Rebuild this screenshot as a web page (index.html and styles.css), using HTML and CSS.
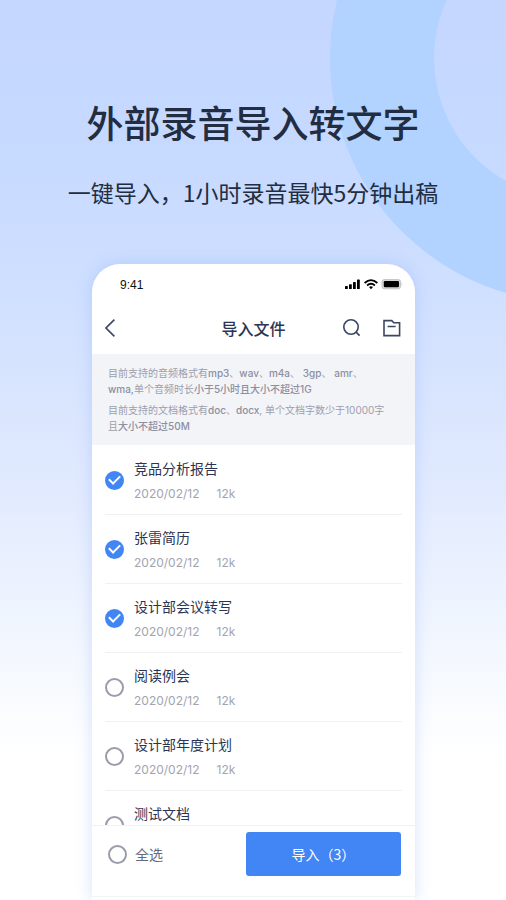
FILE: index.html
```html
<!DOCTYPE html>
<html lang="zh-CN">
  <head>
    <meta charset="utf-8">
    <meta name="viewport" content="width=device-width, initial-scale=1.0">
    <title>外部录音导入转文字</title>
    <link rel="stylesheet" href="styles.css">
  </head>
  <body>
    <div class="backdrop"><svg viewBox="0 0 176 294"><circle cx="245" cy="58" r="193"/></svg></div>

    <header class="intro">
      <h1>外部录音导入转文字</h1>
      <p>一键导入，1小时录音最快5分钟出稿</p>
    </header>

    <main class="phone">
      <!-- status bar -->
      <div class="status-bar">
        <span>9:41</span>
        <svg width="58" height="12" viewBox="0 0 58 12">
          <rect x="0" y="7" width="2.8" height="3" rx="0.6"/>
          <rect x="4" y="5.2" width="2.8" height="4.8" rx="0.6"/>
          <rect x="8" y="3" width="2.8" height="7" rx="0.6"/>
          <rect x="12" y="0.6" width="2.8" height="9.4" rx="0.6"/>
          <g fill="none" stroke="#000" stroke-width="1.8">
            <path d="M19.6 4 Q26 -1.8 32.4 4"/>
            <path d="M22.1 6.5 Q26 3 29.9 6.5"/>
          </g>
          <path d="M24 8.1 Q26 6.6 28 8.1 L26 10.3 Z"/>
          <rect x="37" y="0.6" width="18.6" height="9.2" rx="2.4" fill="#d8d8d8" stroke="#c4c4c4"/>
          <rect x="38.8" y="2.1" width="15.2" height="6.2" rx="1.2"/>
          <path d="M56.6 3.6 Q58 5.2 56.6 6.8 Z" fill="#b5b5b5"/>
        </svg>
      </div>

      <!-- nav bar -->
      <nav class="nav-bar">
        <button class="icon-btn" type="button" aria-label="返回">
          <svg width="20" height="20" viewBox="0 0 20 20"><path d="M9.4 1.6 L1 10 L9.4 18.4"/></svg>
        </button>
        <h2>导入文件</h2>
        <div class="nav-actions">
          <button class="icon-btn" type="button" aria-label="搜索">
            <svg width="20" height="20" viewBox="0 0 20 20"><circle cx="9" cy="9" r="7.2"/><path d="M14.1 14.1 L17.6 17.6"/></svg>
          </button>
          <button class="icon-btn" type="button" aria-label="文件夹">
            <svg width="20" height="20" viewBox="0 0 20 20"><path d="M2 2.6 H9.8 L11.8 4.8 H17.6 V17.6 H2 Z M5.6 8.5 H13.6"/></svg>
          </button>
        </div>
      </nav>

      <section class="notice">
        <p>目前支持的音频格式有<b>mp3</b>、<b>wav</b>、<b>m4a</b>、 <b>3gp</b>、 <b>amr</b>、<br><b>wma,</b>单个音频时长<b>小于5小时且大小不超过1G</b></p>
        <p>目前支持的文档格式有<b>doc</b>、<b>docx</b>, 单个文档字数少于10000字<br>且<b>大小不超过50M</b></p>
      </section>

      <!-- file list -->
      <ul class="file-list">
        <li>
          <label class="file">
            <input class="tick" type="checkbox" checked>
            <span class="file-text"><span class="name">竞品分析报告</span><span class="meta"><span>2020/02/12</span><span>12k</span></span></span>
          </label>
        </li>
        <li>
          <label class="file">
            <input class="tick" type="checkbox" checked>
            <span class="file-text"><span class="name">张雷简历</span><span class="meta"><span>2020/02/12</span><span>12k</span></span></span>
          </label>
        </li>
        <li>
          <label class="file">
            <input class="tick" type="checkbox" checked>
            <span class="file-text"><span class="name">设计部会议转写</span><span class="meta"><span>2020/02/12</span><span>12k</span></span></span>
          </label>
        </li>
        <li>
          <label class="file">
            <input class="tick" type="checkbox">
            <span class="file-text"><span class="name">阅读例会</span><span class="meta"><span>2020/02/12</span><span>12k</span></span></span>
          </label>
        </li>
        <li>
          <label class="file">
            <input class="tick" type="checkbox">
            <span class="file-text"><span class="name">设计部年度计划</span><span class="meta"><span>2020/02/12</span><span>12k</span></span></span>
          </label>
        </li>
        <li>
          <label class="file">
            <input class="tick" type="checkbox">
            <span class="file-text"><span class="name">测试文档</span></span>
          </label>
        </li>
      </ul>

      <footer class="action-bar">
        <label class="select-all"><input class="tick" type="checkbox">全选</label>
        <button class="import-btn" type="button">导入（3）</button>
      </footer>
      <div class="home-area"></div>
    </main>
  </body>
</html>
```

FILE: styles.css
```css
* {
  box-sizing: border-box;
}

body {
  margin: 0;
  height: 100vh;
  display: flex;
  flex-direction: column;
  position: relative;
  overflow: hidden;
  font-family: "Noto Sans CJK SC", sans-serif;
  color: #2b3553;
  background: linear-gradient(#c5d7ff 0%, #c6d9ff 16%, #d0e0ff 33%, #e1eafe 54%, #f1f6fe 70%, #ffffff 84%);
}

h1, h2, p, ul {
  margin: 0;
  padding: 0;
  font-weight: 400;
}

/* big ring behind the heading */
.backdrop {
  position: absolute;
  top: 0;
  right: 0;
  width: 176px;
}

.backdrop svg {
  display: block;
  width: 100%;
  fill: none;
  stroke: #b2d3ff;
  stroke-width: 104;
}

.intro {
  position: relative;
  padding-top: 95px;
  text-align: center;
  color: #222d42;
}

.intro h1 {
  font-size: 37px;
  line-height: 54px;
  font-weight: 500;
}

.intro p {
  margin-top: 26px;
  font-size: 23px;
  line-height: 34px;
}

/* phone */
.phone {
  position: relative;
  flex: 1;
  min-height: 0;
  margin: 55px 91px 0 92px;
  display: flex;
  flex-direction: column;
  background: #ffffff;
  border-radius: 28px 28px 0 0;
  box-shadow: 0 0 16px rgba(120, 155, 245, 0.3);
}

.status-bar {
  height: 42px;
  padding: 0 12px 0 28px;
  display: flex;
  align-items: center;
  justify-content: space-between;
  font-family: "Liberation Sans", Arial, sans-serif;
  font-size: 12px;
  color: #111111;
}

.nav-bar {
  height: 48px;
  padding: 0 13px 4px;
  display: grid;
  grid-template-columns: 1fr auto 1fr;
  align-items: center;
}

.nav-bar h2 {
  font-size: 16px;
  line-height: 24px;
  font-weight: 500;
}

.nav-actions {
  display: flex;
  justify-content: flex-end;
  gap: 20px;
}

.icon-btn {
  width: 20px;
  height: 20px;
  padding: 0;
  border: 0;
  background: none;
}

.icon-btn svg {
  display: block;
  fill: none;
  stroke: #3b4862;
  stroke-width: 1.6;
}

.notice {
  padding: 11px 16px;
  background: #f3f4f7;
  font-family: Inter, "Noto Sans CJK SC", sans-serif;
  font-size: 10px;
  line-height: 16px;
  color: #9c9eae;
  white-space: nowrap;
}

.notice p + p {
  margin-top: 5px;
}

.notice b {
  font-weight: 500;
  color: #8c8fa2;
}

/* file list */
.file-list {
  flex: 1;
  min-height: 0;
  overflow: hidden;
  padding: 1px 13px 0;
  list-style: none;
}

.file {
  height: 69px;
  display: flex;
  align-items: center;
  gap: 10px;
  border-bottom: 1px solid #f0f1f4;
}

.file-text {
  height: 46px;
  display: flex;
  flex-direction: column;
  gap: 6px;
}

.name {
  font-size: 14px;
  line-height: 22px;
}

.meta {
  display: flex;
  gap: 17px;
  font-family: Inter, sans-serif;
  font-size: 12px;
  line-height: 18px;
  color: #a2a4b0;
}

.tick {
  appearance: none;
  flex: none;
  width: 19px;
  height: 19px;
  margin: 0;
  border: 2px solid #9a9cab;
  border-radius: 50%;
  display: grid;
  place-items: center;
}

.tick:checked {
  border-color: #4285f4;
  background: #4285f4;
}

.tick:checked::after {
  content: "";
  width: 9px;
  height: 5px;
  margin-bottom: 3px;
  border: solid #ffffff;
  border-width: 0 0 2px 2px;
  transform: rotate(-45deg);
}

/* bottom bar */
.action-bar {
  padding: 6px 14px 20px 16px;
  display: flex;
  align-items: center;
  justify-content: space-between;
  border-top: 1px solid #f0f1f4;
}

.select-all {
  display: flex;
  align-items: center;
  gap: 8px;
  font-size: 14px;
  color: #666a7c;
}

.import-btn {
  width: 53%;
  height: 44px;
  padding: 0;
  border: 0;
  border-radius: 3px;
  background: #4285f5;
  color: #ffffff;
  font-family: inherit;
  font-size: 14px;
}

.home-area {
  height: 4px;
  border-top: 1px solid #f3f4f7;
}
```
